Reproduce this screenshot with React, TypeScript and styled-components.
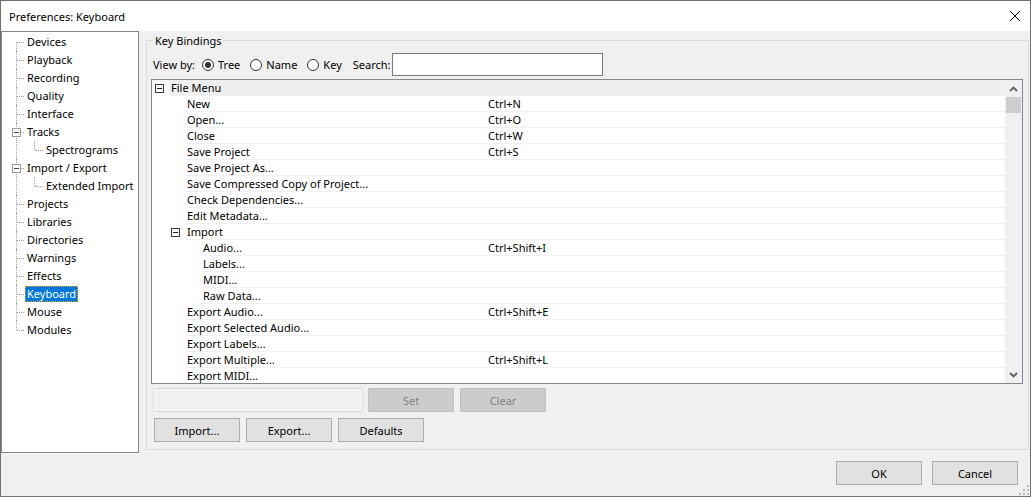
import React from 'react'
import styled, { createGlobalStyle, css } from 'styled-components'

const FONT = `"Noto Sans", "DejaVu Sans", sans-serif`

const GlobalStyle = createGlobalStyle`
  html, body {
    margin: 0;
    padding: 0;
    background: #ffffff;
  }
  body {
    font-family: ${FONT};
    font-size: 11px;
    color: #000;
  }
`

const WindowStyled = styled.div`
  width: 1031px;
  height: 497px;
  box-sizing: border-box;
  border: 1px solid #707070;
  background: #f0f0f0;
  display: flex;
  flex-direction: column;
  position: relative;
  overflow: hidden;
`

const TitleBarStyled = styled.div`
  height: 30px;
  flex-shrink: 0;
  background: #ffffff;
  display: flex;
  align-items: center;
  justify-content: space-between;
  padding-left: 8px;
`

const TitleStyled = styled.div`
  font-size: 11px;
  color: #000;
`

const CloseStyled = styled.div`
  width: 30px;
  height: 30px;
  display: flex;
  align-items: center;
  justify-content: center;
`

const MainStyled = styled.div`
  height: 422px;
  flex-shrink: 0;
  display: flex;
  align-items: flex-start;
`

const TreePanelStyled = styled.div`
  width: 138px;
  height: 422px;
  box-sizing: border-box;
  border: 1px solid #828790;
  background: #ffffff;
  padding-top: 1px;
  flex-shrink: 0;
`

const TreeListStyled = styled.ul`
  list-style: none;
  margin: 0;
  padding: 0;
`

const lineX = (level: number) => (level === 0 ? 14 : 32)
const labelX = (level: number) => (level === 0 ? 23 : 42)

const TreeItemStyled = styled.li<{ $level: number; $first?: boolean; $last?: boolean }>`
  position: relative;
  &::before {
    content: '';
    position: absolute;
    left: ${p => lineX(p.$level)}px;
    top: ${p => (p.$first ? 9 : 0)}px;
    ${p => (p.$last ? 'height: 9px;' : 'bottom: 0;')}
    border-left: 1px dotted #a0a0a0;
  }
`

const TreeRowStyled = styled.div<{ $level: number }>`
  position: relative;
  height: 18px;
  display: flex;
  align-items: center;
  padding-left: ${p => labelX(p.$level)}px;
  &::before {
    content: '';
    position: absolute;
    left: ${p => lineX(p.$level) + 1}px;
    width: ${p => labelX(p.$level) - lineX(p.$level) - 2}px;
    top: 9px;
    border-top: 1px dotted #a0a0a0;
  }
`

const TreeToggleStyled = styled.span<{ $level: number }>`
  position: absolute;
  left: ${p => lineX(p.$level) - 4}px;
  top: 5px;
  width: 9px;
  height: 9px;
  box-sizing: border-box;
  border: 1px solid #9a9a9a;
  background: #ffffff;
  z-index: 1;
  &::after {
    content: '';
    position: absolute;
    left: 1px;
    top: 3px;
    width: 5px;
    height: 1px;
    background: #3d4a5c;
  }
`

const TreeLabelStyled = styled.span<{ $selected?: boolean }>`
  line-height: 16px;
  padding: 0 2px;
  white-space: nowrap;
  ${p =>
    p.$selected &&
    css`
      background: #0078d7;
      color: #ffffff;
      outline: 1px dotted #f0a030;
      outline-offset: -1px;
    `}
`

const GroupStyled = styled.fieldset`
  box-sizing: border-box;
  width: 883px;
  height: 417px;
  margin: 2px 0 0 7px;
  padding: 5px 5px 0 4px;
  border: 1px solid #dcdcdc;
  min-width: 0;
  display: flex;
  flex-direction: column;
`

const LegendStyled = styled.legend`
  padding: 0 2px;
  margin-left: 2px;
  line-height: 15px;
  font-size: 11px;
`

const ViewRowStyled = styled.div`
  height: 23px;
  display: flex;
  align-items: center;
  padding-left: 2px;
  flex-shrink: 0;
`

const ViewLabelStyled = styled.span`
  margin-right: 7px;
`

const RadioOptionStyled = styled.label`
  display: flex;
  align-items: center;
  gap: 4px;
  margin-right: 10px;
`

const RadioStyled = styled.span<{ $checked?: boolean }>`
  width: 12px;
  height: 12px;
  box-sizing: border-box;
  border-radius: 50%;
  border: 1px solid #333333;
  background: #ffffff;
  display: flex;
  align-items: center;
  justify-content: center;
  &::after {
    content: '';
    width: 6px;
    height: 6px;
    border-radius: 50%;
    background: ${p => (p.$checked ? '#333333' : 'transparent')};
  }
`

const SearchLabelStyled = styled.span`
  margin-left: 1px;
  margin-right: 1px;
`

const SearchInputStyled = styled.div`
  width: 211px;
  height: 23px;
  box-sizing: border-box;
  border: 1px solid #7a7a7a;
  background: #ffffff;
`

const ListBoxStyled = styled.div`
  margin-top: 3px;
  height: 305px;
  box-sizing: border-box;
  border: 1px solid #828790;
  background: #ffffff;
  display: flex;
  overflow: hidden;
  flex-shrink: 0;
`

const RowsStyled = styled.div`
  flex: 1;
  overflow: hidden;
`

const RowStyled = styled.div`
  height: 16px;
  display: flex;
`

const IndentStyled = styled.div<{ $level: number }>`
  flex: 0 0 ${p => 17 + 16 * p.$level}px;
  box-sizing: border-box;
  display: flex;
  align-items: center;
  justify-content: flex-end;
  padding-right: 5px;
`

const ExpanderStyled = styled.span`
  width: 9px;
  height: 9px;
  box-sizing: border-box;
  border: 1px solid #3a3a3a;
  display: flex;
  align-items: center;
  justify-content: center;
  &::after {
    content: '';
    width: 5px;
    height: 1px;
    background: #222222;
  }
`

const CellsStyled = styled.div<{ $highlight?: boolean }>`
  flex: 1;
  display: flex;
  align-items: center;
  height: 16px;
  box-sizing: border-box;
  border-bottom: 1px solid #f0f0f0;
  background: ${p => (p.$highlight ? '#efefef' : 'transparent')};
`

const NameCellStyled = styled.div<{ $level: number }>`
  width: ${p => 319 - 16 * p.$level}px;
  flex-shrink: 0;
  box-sizing: border-box;
  padding-left: 2px;
  white-space: nowrap;
  line-height: 15px;
`

const KeyCellStyled = styled.div`
  flex: 1;
  white-space: nowrap;
  line-height: 15px;
`

const ScrollbarStyled = styled.div`
  width: 17px;
  flex-shrink: 0;
  background: #f0f0f0;
  display: flex;
  flex-direction: column;
`

const ScrollButtonStyled = styled.div`
  height: 17px;
  display: flex;
  align-items: center;
  justify-content: center;
  flex-shrink: 0;
`

const ThumbStyled = styled.div`
  height: 16px;
  margin: 0 1px;
  background: #cdcdcd;
  flex-shrink: 0;
`

const TrackStyled = styled.div`
  flex: 1;
`

const ControlsRowStyled = styled.div<{ $top: number }>`
  display: flex;
  align-items: center;
  gap: 6px;
  margin-top: ${p => p.$top}px;
  flex-shrink: 0;
`

const KeyInputStyled = styled.div`
  width: 210px;
  height: 24px;
  box-sizing: border-box;
  margin-left: 2px;
  margin-right: -1px;
  border: 1px solid #d9d9d9;
  box-shadow: inset 0 0 0 1px #fafafa;
  background: #f0f0f0;
`

const ButtonStyled = styled.button<{ $disabled?: boolean }>`
  width: 86px;
  height: 24px;
  box-sizing: border-box;
  padding: 0;
  margin: 0;
  font-family: ${FONT};
  font-size: 11px;
  border: 1px solid ${p => (p.$disabled ? '#bfbfbf' : '#adadad')};
  background: ${p => (p.$disabled ? '#cccccc' : '#e1e1e1')};
  color: ${p => (p.$disabled ? '#838383' : '#000000')};
`

const FirstButtonStyled = styled(ButtonStyled)`
  margin-left: 3px;
`

const FooterStyled = styled.div`
  flex: 1;
  display: flex;
  justify-content: flex-end;
  align-items: flex-start;
  gap: 10px;
  padding: 8px 12px 0 0;
  position: relative;
`

const GripStyled = styled.div`
  position: absolute;
  right: 1px;
  bottom: 1px;
  width: 10px;
  height: 10px;
  display: flex;
`

type TreeNode = { label: string; selected?: boolean; children?: string[] }

const treeNodes: TreeNode[] = [
  { label: 'Devices' },
  { label: 'Playback' },
  { label: 'Recording' },
  { label: 'Quality' },
  { label: 'Interface' },
  { label: 'Tracks', children: ['Spectrograms'] },
  { label: 'Import / Export', children: ['Extended Import'] },
  { label: 'Projects' },
  { label: 'Libraries' },
  { label: 'Directories' },
  { label: 'Warnings' },
  { label: 'Effects' },
  { label: 'Keyboard', selected: true },
  { label: 'Mouse' },
  { label: 'Modules' },
]

type Binding = { name: string; key?: string; level: number; group?: boolean; highlight?: boolean }

const bindings: Binding[] = [
  { name: 'File Menu', level: 0, group: true, highlight: true },
  { name: 'New', key: 'Ctrl+N', level: 1 },
  { name: 'Open...', key: 'Ctrl+O', level: 1 },
  { name: 'Close', key: 'Ctrl+W', level: 1 },
  { name: 'Save Project', key: 'Ctrl+S', level: 1 },
  { name: 'Save Project As...', level: 1 },
  { name: 'Save Compressed Copy of Project...', level: 1 },
  { name: 'Check Dependencies...', level: 1 },
  { name: 'Edit Metadata...', level: 1 },
  { name: 'Import', level: 1, group: true },
  { name: 'Audio...', key: 'Ctrl+Shift+I', level: 2 },
  { name: 'Labels...', level: 2 },
  { name: 'MIDI...', level: 2 },
  { name: 'Raw Data...', level: 2 },
  { name: 'Export Audio...', key: 'Ctrl+Shift+E', level: 1 },
  { name: 'Export Selected Audio...', level: 1 },
  { name: 'Export Labels...', level: 1 },
  { name: 'Export Multiple...', key: 'Ctrl+Shift+L', level: 1 },
  { name: 'Export MIDI...', level: 1 },
]

function Chevron({ down }: { down?: boolean }) {
  return (
    <svg width="9" height="6" viewBox="0 0 9 6">
      <path
        d={down ? 'M1 1 L4.5 4.5 L8 1' : 'M1 5 L4.5 1.5 L8 5'}
        fill="none"
        stroke="#606060"
        strokeWidth="1.8"
      />
    </svg>
  )
}

function PrefTree() {
  return (
    <TreePanelStyled>
      <TreeListStyled>
        {treeNodes.map((node, i) => (
          <TreeItemStyled
            key={node.label}
            $level={0}
            $first={i === 0}
            $last={i === treeNodes.length - 1}
          >
            <TreeRowStyled $level={0}>
              {node.children && <TreeToggleStyled $level={0} />}
              <TreeLabelStyled $selected={node.selected}>{node.label}</TreeLabelStyled>
            </TreeRowStyled>
            {node.children && (
              <TreeListStyled>
                {node.children.map((child, j) => (
                  <TreeItemStyled key={child} $level={1} $last={j === node.children!.length - 1}>
                    <TreeRowStyled $level={1}>
                      <TreeLabelStyled>{child}</TreeLabelStyled>
                    </TreeRowStyled>
                  </TreeItemStyled>
                ))}
              </TreeListStyled>
            )}
          </TreeItemStyled>
        ))}
      </TreeListStyled>
    </TreePanelStyled>
  )
}

function BindingsList() {
  return (
    <ListBoxStyled>
      <RowsStyled>
        {bindings.map(row => (
          <RowStyled key={row.name}>
            <IndentStyled $level={row.level}>{row.group && <ExpanderStyled />}</IndentStyled>
            <CellsStyled $highlight={row.highlight}>
              <NameCellStyled $level={row.level}>{row.name}</NameCellStyled>
              <KeyCellStyled>{row.key}</KeyCellStyled>
            </CellsStyled>
          </RowStyled>
        ))}
      </RowsStyled>
      <ScrollbarStyled>
        <ScrollButtonStyled>
          <Chevron />
        </ScrollButtonStyled>
        <ThumbStyled />
        <TrackStyled />
        <ScrollButtonStyled>
          <Chevron down />
        </ScrollButtonStyled>
      </ScrollbarStyled>
    </ListBoxStyled>
  )
}

function App() {
  return (
    <>
      <GlobalStyle />
      <WindowStyled>
        <TitleBarStyled>
          <TitleStyled>Preferences: Keyboard</TitleStyled>
          <CloseStyled>
            <svg width="10" height="10" viewBox="0 0 10 10">
              <path d="M0 0 L10 10 M10 0 L0 10" stroke="#000" strokeWidth="1" />
            </svg>
          </CloseStyled>
        </TitleBarStyled>
        <MainStyled>
          <PrefTree />
          <GroupStyled>
            <LegendStyled>Key Bindings</LegendStyled>
            <ViewRowStyled>
              <ViewLabelStyled>View by:</ViewLabelStyled>
              <RadioOptionStyled>
                <RadioStyled $checked />
                Tree
              </RadioOptionStyled>
              <RadioOptionStyled>
                <RadioStyled />
                Name
              </RadioOptionStyled>
              <RadioOptionStyled>
                <RadioStyled />
                Key
              </RadioOptionStyled>
              <SearchLabelStyled>Search:</SearchLabelStyled>
              <SearchInputStyled />
            </ViewRowStyled>
            <BindingsList />
            <ControlsRowStyled $top={4}>
              <KeyInputStyled />
              <ButtonStyled $disabled>Set</ButtonStyled>
              <ButtonStyled $disabled>Clear</ButtonStyled>
            </ControlsRowStyled>
            <ControlsRowStyled $top={6}>
              <FirstButtonStyled>Import...</FirstButtonStyled>
              <ButtonStyled>Export...</ButtonStyled>
              <ButtonStyled>Defaults</ButtonStyled>
            </ControlsRowStyled>
          </GroupStyled>
        </MainStyled>
        <FooterStyled>
          <ButtonStyled>OK</ButtonStyled>
          <ButtonStyled>Cancel</ButtonStyled>
          <GripStyled>
            <svg width="10" height="10" viewBox="0 0 10 10">
              {[
                [8, 0],
                [4, 4],
                [8, 4],
                [0, 8],
                [4, 8],
                [8, 8],
              ].map(([x, y]) => (
                <rect key={`${x}-${y}`} x={x} y={y} width="2" height="2" fill="#bcbcbc" />
              ))}
            </svg>
          </GripStyled>
        </FooterStyled>
      </WindowStyled>
    </>
  )
}

export default App
